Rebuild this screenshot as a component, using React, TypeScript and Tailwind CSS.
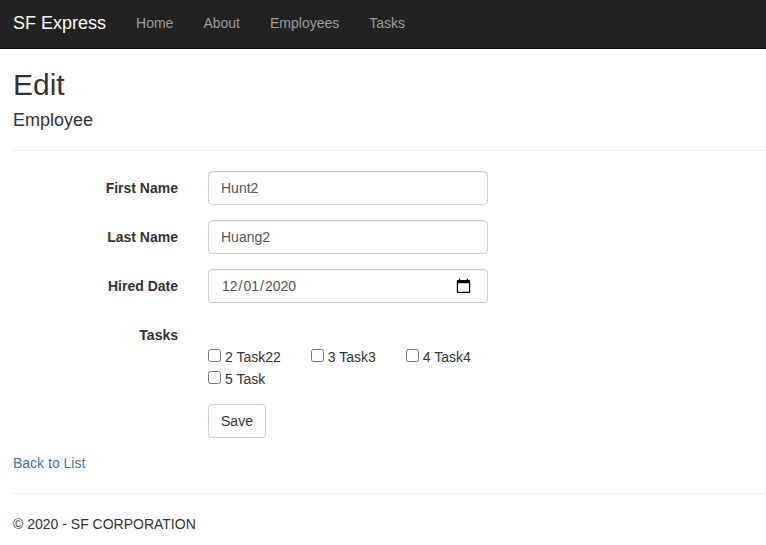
import type { ReactNode } from "react";

const navItems = ["Home", "About", "Employees", "Tasks"];

function Row({ label, children }: { label: string; children: ReactNode }) {
  return (
    <div className="mb-[15px] flex">
      <label className="w-[165px] shrink-0 pt-[7px] text-right font-bold">{label}</label>
      <div className="relative ml-[30px] w-[280px]">{children}</div>
    </div>
  );
}

const control =
  "h-[34px] w-[280px] rounded-[4px] border border-[#ccc] bg-white px-3 py-1.5 text-[14px] leading-5 text-[#555] shadow-[inset_0_1px_1px_rgba(0,0,0,0.075)] outline-none [&::-webkit-calendar-picker-indicator]:opacity-0";

function Check({ label }: { label: string }) {
  return (
    <label className="flex h-[22px] items-center whitespace-nowrap">
      <input type="checkbox" className="mr-1 mb-1 size-[13px]" />
      {label}
    </label>
  );
}

function CalendarIcon() {
  return (
    <svg
      className="pointer-events-none absolute top-[9px] right-[17px]"
      width="15"
      height="16"
      viewBox="0 0 15 16"
      fill="#000"
      aria-hidden="true"
    >
      <path
        fillRule="evenodd"
        d="M3 .7h1.3V2h6.4V.7H12V2h1a1.2 1.2 0 0 1 1.2 1.2v10.6A1.2 1.2 0 0 1 13 15H2a1.2 1.2 0 0 1-1.2-1.2V3.2A1.2 1.2 0 0 1 2 2h1zM2 5.3v8.5h11V5.3z"
      />
    </svg>
  );
}

export default function App() {
  return (
    <div className="h-[545px] overflow-hidden bg-white font-['Liberation_Sans',Arial,sans-serif] text-[14px] leading-5 text-[#333]">
      <nav className="flex h-[49px] items-center border-b border-[#080808] bg-[#222] pb-[3px] pl-[13px] text-[#9d9d9d]">
        <a className="mr-[15px] text-[18px] text-white">SF Express</a>
        {navItems.map((item) => (
          <a key={item} className="px-[15px]">{item}</a>
        ))}
      </nav>
      <main className="pl-[13px]">
        <h2 className="pt-[19px] text-[30px] leading-[33px]">Edit</h2>
        <h4 className="mt-[9px] text-[18px] leading-5">Employee</h4>
        <hr className="mt-5 mb-5 border-[#eee]" />
        <form>
          <Row label="First Name"><input className={control} defaultValue="Hunt2" /></Row>
          <Row label="Last Name"><input className={control} defaultValue="Huang2" /></Row>
          <Row label="Hired Date">
            <input type="date" className={control} defaultValue="2020-12-01" />
            <CalendarIcon />
          </Row>
          <div className="flex h-[86px]">
            <span className="w-[165px] pt-[7px] text-right font-bold">Tasks</span>
            <div className="ml-[30px] pt-7">
              <div className="flex gap-[30px]">
                <Check label="2 Task22" />
                <Check label="3 Task3" />
                <Check label="4 Task4" />
              </div>
              <Check label="5 Task" />
            </div>
          </div>
          <button type="button" className="ml-[195px] block h-[34px] w-[58px] rounded-[4px] border border-[#ccc] bg-white">Save</button>
        </form>
        <a className="mt-[15px] block text-[#337ab7]">Back to List</a>
        <hr className="my-5 border-[#eee]" />
        <p>© 2020 - SF CORPORATION</p>
      </main>
    </div>
  );
}
